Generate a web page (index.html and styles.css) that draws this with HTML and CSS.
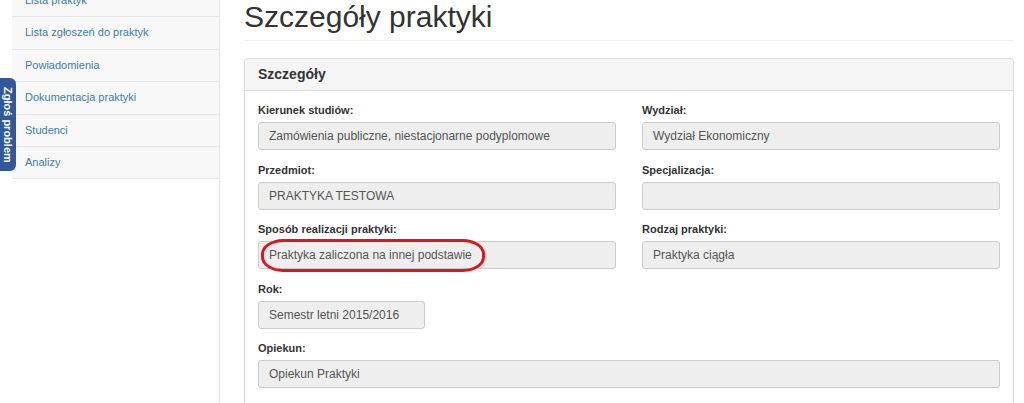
FILE: index.html
```html
<!DOCTYPE html>
<html lang="pl">
<head>
    <meta charset="UTF-8">
    <title>Szczegóły praktyki</title>
    <link rel="stylesheet" href="styles.css">
</head>
<body>
    <a class="report-tab" href="#">Zgłoś problem</a>

    <div class="layout">
        <div class="sidebar">
            <ul class="side-nav">
                <li><a href="#">Lista praktyk</a></li>
                <li><a href="#">Lista zgłoszeń do praktyk</a></li>
                <li><a href="#">Powiadomienia</a></li>
                <li><a href="#">Dokumentacja praktyki</a></li>
                <li><a href="#">Studenci</a></li>
                <li><a href="#">Analizy</a></li>
            </ul>
        </div>

        <div class="main">
            <h1 class="page-header">Szczegóły praktyki</h1>

            <div class="panel">
                <div class="panel-heading">Szczegóły</div>
                <div class="panel-body">
                    <div class="field">
                        <label>Kierunek studiów:</label>
                        <div class="form-control">Zamówienia publiczne, niestacjonarne podyplomowe</div>
                    </div>
                    <div class="field">
                        <label>Wydział:</label>
                        <div class="form-control">Wydział Ekonomiczny</div>
                    </div>
                    <div class="field">
                        <label>Przedmiot:</label>
                        <div class="form-control">PRAKTYKA TESTOWA</div>
                    </div>
                    <div class="field">
                        <label>Specjalizacja:</label>
                        <div class="form-control"></div>
                    </div>
                    <div class="field">
                        <label>Sposób realizacji praktyki:</label>
                        <div class="form-control">Praktyka zaliczona na innej podstawie
                            <span class="mark"></span>
                        </div>
                    </div>
                    <div class="field">
                        <label>Rodzaj praktyki:</label>
                        <div class="form-control">Praktyka ciągła</div>
                    </div>
                    <div class="field field-full">
                        <label>Rok:</label>
                        <div class="form-control short">Semestr letni 2015/2016</div>
                    </div>
                    <div class="field field-full">
                        <label>Opiekun:</label>
                        <div class="form-control">Opiekun Praktyki</div>
                    </div>
                </div>
            </div>
        </div>
    </div>
</body>
</html>
```

FILE: styles.css
```css
body {
    margin: 0;
    font-family: "Liberation Sans", Arial, sans-serif;
    color: #333;
    background: #fff;
    overflow: hidden;
}

.report-tab {
    position: absolute;
    left: 0;
    top: 78px;
    width: 16px;
    height: 93px;
    background-color: #30589a;
    border-radius: 0 6px 6px 0;
    color: #fff;
    font-size: 11px;
    font-weight: bold;
    text-decoration: none;
    writing-mode: vertical-rl;
    display: flex;
    align-items: center;
    justify-content: center;
    z-index: 2;
}

.layout {
    display: flex;
    min-height: 100vh;
}

.sidebar {
    width: 207px;
    margin-left: 12px;
    border-right: 1px solid #e7e7e7;
    flex-shrink: 0;
}

.side-nav {
    list-style: none;
    margin: -15px 0 0;
    padding: 0;
    background-color: #f8f8f8;
}
.side-nav li {
    border-bottom: 1px solid #e7e7e7;
}
.side-nav a {
    display: block;
    padding: 0 13px;
    line-height: 31.4px;
    font-size: 11px;
    color: #3a7fab;
    text-decoration: none;
}

.main {
    width: 770px;
    margin-left: 24px;
}

.page-header {
    margin: 0 0 17px;
    padding-bottom: 7px;
    font-size: 30px;
    font-weight: normal;
    line-height: 33px;
    color: #333;
    border-bottom: 1px solid #eee;
}

.panel {
    border: 1px solid #ddd;
    border-radius: 4px;
}
.panel-heading {
    padding: 0 13px;
    line-height: 31px;
    font-size: 14px;
    font-weight: bold;
    background-color: #f5f5f5;
    border-bottom: 1px solid #ddd;
    border-radius: 3px 3px 0 0;
}
.panel-body {
    display: grid;
    grid-template-columns: 1fr 1fr;
    column-gap: 26px;
    padding: 12px 13px 20px;
}

.field {
    height: 59.5px;
}
.field-full {
    grid-column: 1 / 3;
}
.field label {
    display: block;
    font-size: 11px;
    font-weight: bold;
    line-height: 15px;
    margin-bottom: 4px;
}

.form-control {
    position: relative;
    box-sizing: border-box;
    height: 28px;
    padding: 0 10px;
    font-size: 12px;
    line-height: 26px;
    color: #555;
    background-color: #eee;
    border: 1px solid #ccc;
    border-radius: 3px;
}
.form-control.short {
    width: 167px;
}

/* red annotation drawn over the field */
.mark {
    position: absolute;
    left: 2px;
    top: -3px;
    width: 224px;
    height: 33px;
    box-sizing: border-box;
    border: 3px solid #e0141c;
    border-radius: 22px / 15px;
}
```
